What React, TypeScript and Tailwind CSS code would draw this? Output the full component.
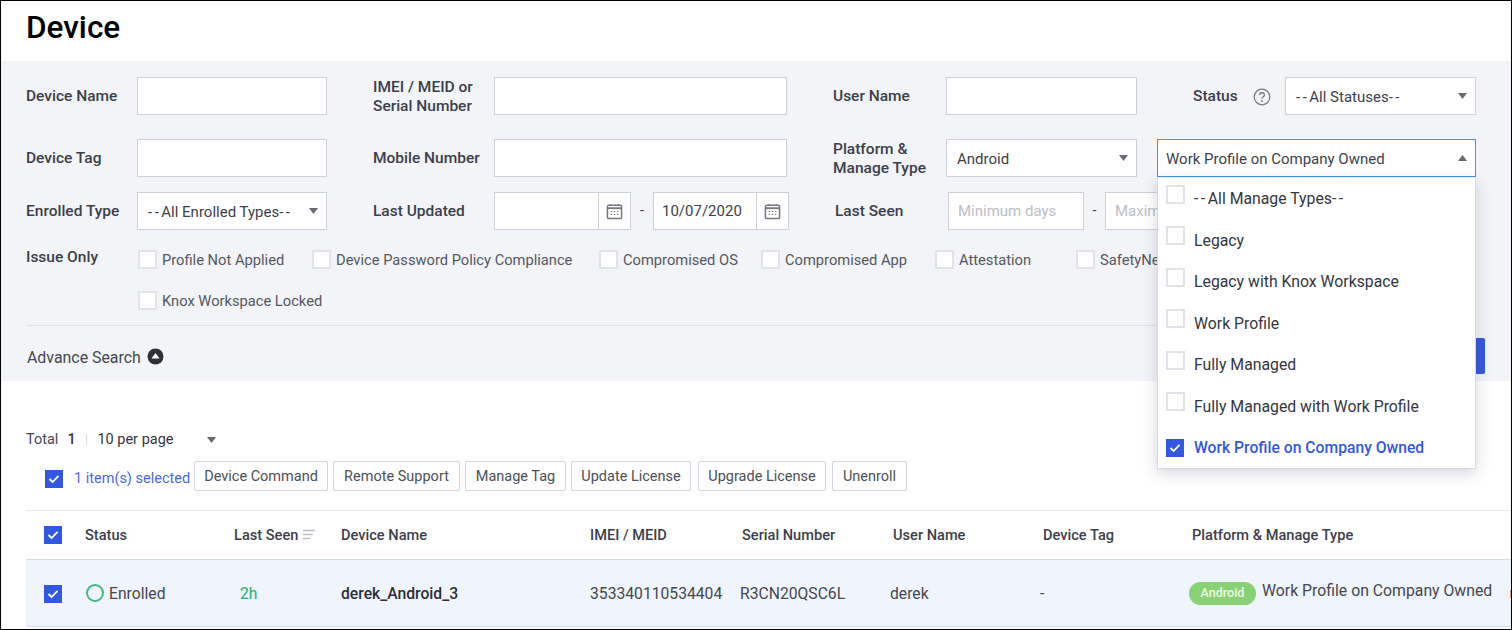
import React from "react";

const Caret = ({ up = false }: { up?: boolean }) => (
  <svg width="9" height="6" viewBox="0 0 9 6" className="shrink-0">
    <path d={up ? "M4.5 0 L9 6 L0 6 Z" : "M0 0 L9 0 L4.5 6 Z"} fill="#666a72" />
  </svg>
);

const Check = ({ className = "" }: { className?: string }) => (
  <span className={`flex h-[18px] w-[18px] shrink-0 items-center justify-center bg-[#3358e0] ${className}`}>
    <svg width="12" height="10" viewBox="0 0 12 10">
      <path d="M1.5 5 L4.6 8 L10.5 1.8" fill="none" stroke="#fff" strokeWidth="1.8" />
    </svg>
  </span>
);

const Box = ({ className = "" }: { className?: string }) => (
  <span className={`block h-[19px] w-[19px] shrink-0 border-2 border-[#e2e3e9] bg-white ${className}`} />
);

const Label = ({ w, children, className = "" }: { w: string; children: React.ReactNode; className?: string }) => (
  <div className={`shrink-0 pt-[1px] text-[15.5px] font-medium leading-[19px] text-[#3c3f4a] ${w} ${className}`}>{children}</div>
);

const Field = ({ w }: { w: string }) => (
  <input readOnly className={`h-[38px] shrink-0 border border-[#cdd0da] bg-white px-2 ${w}`} />
);

const Dashed = ({ text }: { text: string }) => (
  <span>
    {text.split(/(--)/).map((part, i) =>
      part === "--" ? (
        <span key={i} className="tracking-[2.5px]">
          --
        </span>
      ) : (
        <span key={i}>{part}</span>
      ),
    )}
  </span>
);

const Select = ({ w, text, up = false, active = false }: { w: string; text: string; up?: boolean; active?: boolean }) => (
  <div
    className={`flex h-[38px] shrink-0 items-center justify-between border bg-white pr-[8px] text-[15px] text-[#3c3f4a] ${
      active ? "border-[#3f97d6] pl-[8px]" : "border-[#cdd0da] pl-[10px]"
    } ${w}`}
  >
    <span className="pt-[2px]">
      <Dashed text={text} />
    </span>
    <Caret up={up} />
  </div>
);

const Calendar = () => (
  <svg width="17" height="17" viewBox="0 0 18 18">
    <rect x="1.5" y="2.5" width="15" height="14" rx="1.5" fill="none" stroke="#77797f" strokeWidth="1.6" />
    <path d="M1.5 5.5 H16.5" stroke="#77797f" strokeWidth="2" />
    <path d="M5 1 V3 M13 1 V3" stroke="#77797f" strokeWidth="1.4" />
    <path d="M5 9 H6.5 M8.2 9 H9.8 M11.5 9 H13 M5 12 H6.5 M8.2 12 H9.8 M11.5 12 H13" stroke="#77797f" strokeWidth="1.2" />
  </svg>
);

const DateField = ({ w, value = "" }: { w: string; value?: string }) => (
  <div className={`flex h-[38px] shrink-0 border border-[#cdd0da] bg-white ${w}`}>
    <div className="flex flex-1 items-center pl-[8px] pt-[1px] text-[15px] text-[#3c3f4a]">{value}</div>
    <div className="flex w-[32px] items-center justify-center border-l border-[#cdd0da]">
      <Calendar />
    </div>
  </div>
);

const Issue = ({ text, w }: { text: string; w: string }) => (
  <div className={`flex h-[19px] shrink-0 items-center ${w}`}>
    <Box />
    <span className="ml-[5px] whitespace-nowrap text-[14.7px] leading-[18px] text-[#55585f]">{text}</span>
  </div>
);

const ActionButton = ({ text, w, className = "" }: { text: string; w: string; className?: string }) => (
  <div
    className={`flex h-[30px] shrink-0 items-center justify-center rounded-[2px] border border-[#d3d5de] bg-white pt-[1px] text-[14.5px] text-[#4c4f57] ${w} ${className}`}
  >
    {text}
  </div>
);

const MenuItem = ({ text, selected = false }: { text: string; selected?: boolean }) => (
  <div className="flex h-[41.5px] items-center pl-[8px]">
    {selected ? <Check className="mr-[10px]" /> : <Box className="mb-[9px] mr-[9px]" />}
    <span className={`pt-[1px] ${selected ? "text-[15.7px] font-medium text-[#3358e0]" : "text-[15.8px] text-[#33363f]"}`}>
      <Dashed text={text} />
    </span>
  </div>
);

const columns = "grid grid-cols-[41px_149px_107px_249px_152px_151px_150px_149px_1fr] items-center pl-[18px]";

export default function App() {
  return (
    <div
      className="relative h-[630px] w-[1512px] overflow-hidden border border-black bg-white"
      style={{ fontFamily: "Roboto, 'Liberation Sans', sans-serif" }}
    >
      <div className="flex h-[60px] items-start pl-[25px] pt-[8px]">
        <h1 className="text-[31.5px] font-medium leading-[38px] text-black">Device</h1>
      </div>

      <section className="h-[320px] bg-[#f2f4f8] pl-[25px] pr-[26px] pt-[16px]">
        <div className="flex h-[38px] items-center">
          <Label w="w-[111px]">Device Name</Label>
          <Field w="w-[190px]" />
          <Label w="w-[121px]" className="ml-[46px]">IMEI / MEID or<br />Serial Number</Label>
          <Field w="w-[293px]" />
          <Label w="w-[113px]" className="ml-[46px]">User Name</Label>
          <Field w="w-[191px]" />
          <Label w="w-[92px]" className="ml-[56px] flex items-center">
            Status
            <svg width="18" height="18" viewBox="0 0 18 18" className="ml-[15px]">
              <circle cx="9" cy="9" r="7.8" fill="none" stroke="#77797f" strokeWidth="1.2" />
              <path d="M6.6 7 C6.6 4 11.4 4 11.4 7 C11.4 8.8 9 8.8 9 10.8" fill="none" stroke="#77797f" strokeWidth="1.3" />
              <circle cx="9" cy="13" r="0.9" fill="#77797f" />
            </svg>
          </Label>
          <Select w="w-[191px]" text="--All Statuses--" />
        </div>

        <div className="mt-[24px] flex h-[38px] items-center">
          <Label w="w-[111px]">Device Tag</Label>
          <Field w="w-[190px]" />
          <Label w="w-[121px]" className="ml-[46px]">Mobile Number</Label>
          <Field w="w-[293px]" />
          <Label w="w-[113px]" className="ml-[46px]">Platform &amp;<br />Manage Type</Label>
          <Select w="w-[191px]" text="Android" />
          <div className="ml-[20px]">
            <Select w="w-[319px]" text="Work Profile on Company Owned" up active />
          </div>
        </div>

        <div className="mt-[15px] flex h-[38px] items-center">
          <Label w="w-[111px]">Enrolled Type</Label>
          <Select w="w-[190px]" text="--All Enrolled Types--" />
          <Label w="w-[121px]" className="ml-[46px]">Last Updated</Label>
          <DateField w="w-[137px]" />
          <span className="w-[22px] text-center text-[14.5px] text-[#3c3f4a]">-</span>
          <DateField w="w-[136px]" value="10/07/2020" />
          <Label w="w-[113px]" className="ml-[46px]">Last Seen</Label>
          <input
            readOnly
            placeholder="Minimum days"
            className="h-[38px] w-[136px] shrink-0 border border-[#cdd0da] bg-white pl-[9px] text-[15px] placeholder:text-[#bcbec4]"
          />
          <span className="w-[21px] text-center text-[14.5px] text-[#3c3f4a]">-</span>
          <input
            readOnly
            placeholder="Maximum days"
            className="h-[38px] w-[136px] shrink-0 border border-[#cdd0da] bg-white pl-[9px] text-[15px] placeholder:text-[#bcbec4]"
          />
        </div>

        <div className="mt-[20px] flex items-start">
          <Label w="w-[112px]" className="-mt-[3px]">Issue Only</Label>
          <div className="flex flex-col gap-[22px]">
            <div className="flex">
              <Issue w="w-[174px]" text="Profile Not Applied" />
              <Issue w="w-[287px]" text="Device Password Policy Compliance" />
              <Issue w="w-[162px]" text="Compromised OS" />
              <Issue w="w-[174px]" text="Compromised App" />
              <Issue w="w-[141px]" text="Attestation" />
              <Issue w="w-[100px]" text="SafetyNet" />
            </div>
            <Issue w="w-[200px]" text="Knox Workspace Locked" />
          </div>
        </div>

        <div className="mr-[30px] mt-[15px] h-[1px] bg-[#dfe1e6]" />

        <div className="flex items-start justify-between">
          <div className="mt-[22px] flex items-center pl-[1px] text-[15.9px] leading-[20px] text-[#45484f]">
            Advance Search
            <svg width="17" height="17" viewBox="0 0 17 17" className="ml-[6px] -mt-[3px]">
              <circle cx="8.5" cy="8.5" r="8" fill="#2e3038" />
              <path d="M8.5 5 L12.5 10.5 H4.5 Z" fill="#fff" />
            </svg>
          </div>
          <div className="mt-[12px] h-[36px] w-[90px] rounded-[2px] bg-[#3358e0]" />
        </div>
      </section>

      <section className="pl-[25px]">
        <div className="flex h-[80px] items-center pt-[37px] text-[14.5px] text-[#45484f]">
          <span>Total</span>
          <span className="ml-[9px] w-[8px] font-medium text-[#33363f]">1</span>
          <span className="ml-[11px] h-[11px] w-[1px] bg-[#d9dbe4]" />
          <span className="ml-[10px] w-[110px] text-[#33363f]">10 per page</span>
          <Caret />
        </div>

        <div className="flex items-center">
          <Check className="ml-[19px] mt-[6px]" />
          <span className="ml-[11px] mt-[5px] w-[120px] text-[14.5px] text-[#4a6ae0]">1 item(s) selected</span>
          <ActionButton w="w-[134px]" text="Device Command" />
          <ActionButton w="w-[127px]" className="ml-[5px]" text="Remote Support" />
          <ActionButton w="w-[101px]" className="ml-[5px]" text="Manage Tag" />
          <ActionButton w="w-[120px]" className="ml-[5px]" text="Update License" />
          <ActionButton w="w-[128px]" className="ml-[7px]" text="Upgrade License" />
          <ActionButton w="w-[75px]" className="ml-[6px]" text="Unenroll" />
        </div>

        <div className={`mt-[19px] h-[50px] border-y border-t-[#e6e8ec] border-b-[#d3dcea] pt-[1px] text-[14.6px] font-medium text-[#3c3f4a] ${columns}`}>
          <Check className="-mt-[1px]" />
          <span>Status</span>
          <span className="flex items-center">
            Last Seen
            <svg width="12" height="12" viewBox="0 0 12 12" className="ml-[5px]">
              <path d="M0 1.5 H12 M0 5.5 H9.5 M0 9.5 H7" stroke="#bcbec4" strokeWidth="1.6" />
            </svg>
          </span>
          <span>Device Name</span>
          <span>IMEI / MEID</span>
          <span>Serial Number</span>
          <span>User Name</span>
          <span>Device Tag</span>
          <span>Platform &amp; Manage Type</span>
        </div>

        <div className={`h-[67px] whitespace-nowrap border-b border-b-[#d3e2f5] bg-[#f0f4fc] pt-[1px] text-[15.7px] text-[#45484f] ${columns}`}>
          <Check />
          <span className="flex items-center">
            <span className="ml-[1px] h-[18px] w-[18px] rounded-full border-2 border-[#42b883]" />
            <span className="ml-[5px]">Enrolled</span>
          </span>
          <span className="ml-[6px] text-[#27ae6e]">2h</span>
          <span className="font-medium text-[#2c2f38]">derek_Android_3</span>
          <span>353340110534404</span>
          <span className="-ml-[2px]">R3CN20QSC6L</span>
          <span className="-ml-[3px]">derek</span>
          <span className="-ml-[3px]">-</span>
          <span className="-ml-[3px] flex items-center">
            <span className="flex h-[23px] w-[67px] shrink-0 items-center justify-center rounded-full bg-[#88d275] text-[12.5px] font-medium text-[#eef8ea]">Android</span>
            <span className="mb-[6px] ml-[6px] text-[15.8px]">Work Profile on Company Owned</span>
            <span className="ml-[18px] h-[8px] w-[2px] shrink-0 bg-[#e8a33d]" />
          </span>
        </div>
      </section>

      <div className="absolute left-[1156px] top-[177px] z-10 h-[291px] w-[319px] border border-t-0 border-[#d9dbe4] bg-white shadow-[0_4px_14px_rgba(60,70,90,0.22)]">
        <MenuItem text="--All Manage Types--" />
        <MenuItem text="Legacy" />
        <MenuItem text="Legacy with Knox Workspace" />
        <MenuItem text="Work Profile" />
        <MenuItem text="Fully Managed" />
        <MenuItem text="Fully Managed with Work Profile" />
        <MenuItem text="Work Profile on Company Owned" selected />
      </div>
    </div>
  );
}
